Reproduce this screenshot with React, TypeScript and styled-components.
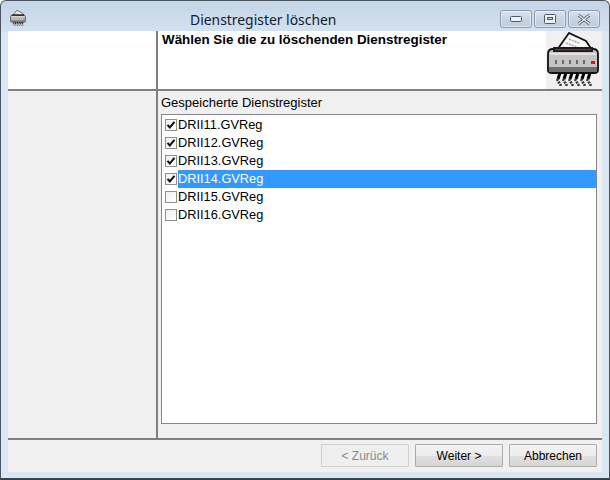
import React from "react";
import styled, { createGlobalStyle } from "styled-components";

const Global = createGlobalStyle`
  html, body { margin: 0; padding: 0; background: #fff; }
  body { width: 610px; height: 480px; overflow: hidden; font-family: "Liberation Sans", Arial, sans-serif; }
`;

const Window = styled.div`
  box-sizing: border-box;
  width: 610px;
  height: 480px;
  display: flex;
  flex-direction: column;
  border: 1px solid #4a5560;
  border-radius: 6px 6px 0 0;
  border-bottom-width: 2px;
  border-bottom-color: #3c4248;
  background: linear-gradient(180deg, #c4d5e6 0px, #d3e1ef 30px, #d9e6f4 31px, #d9e6f4 100%);
`;

const TitleBar = styled.div`
  height: 30px;
  flex: none;
  display: flex;
  align-items: flex-start;
  position: relative;
  padding-left: 9px;
`;

const TitleIcon = styled.div`
  margin-top: 9px;
  line-height: 0;
`;

const Title = styled.div`
  position: absolute;
  left: 189px;
  top: 10px;
  font: 13.9px/18px "Noto Sans", "Open Sans", sans-serif;
  color: #10202e;
  white-space: nowrap;
`;

const WindowButtons = styled.div`
  margin-left: auto;
  margin-right: 9px;
  margin-top: 9px;
  display: flex;
  gap: 2px;
`;

const WindowButton = styled.div`
  box-sizing: border-box;
  width: 32px;
  height: 18px;
  border: 1px solid #8a9cae;
  border-radius: 3px;
  background: linear-gradient(180deg, #d8e3ee 0%, #c6d5e4 50%, #bccddd 100%);
  box-shadow: inset 0 0 0 1px rgba(255, 255, 255, 0.45);
  display: flex;
  align-items: center;
  justify-content: center;
`;

const Client = styled.div`
  flex: 1;
  margin: 0 7px 6px 7px;
  background: #f0f0f0;
  display: flex;
  flex-direction: column;
  min-height: 0;
`;

const HeaderRow = styled.div`
  height: 58px;
  flex: none;
  display: flex;
  border-bottom: 2px solid #808080;
`;

const Side = styled.div<{ $white?: boolean }>`
  width: 148px;
  flex: none;
  border-right: 2px solid #808080;
  background: ${(p) => (p.$white ? "#fff" : "#f0f0f0")};
`;

const HeaderBody = styled.div`
  flex: 1;
  display: flex;
  background: #fff;
`;

const Heading = styled.div`
  flex: 1;
  padding: 1px 0 0 4px;
  font-weight: 700;
  font-size: 13.4px;
  line-height: 16px;
  color: #000;
`;

const IconBox = styled.div`
  width: 56px;
  flex: none;
  box-sizing: border-box;
  padding: 1px 0 0 1px;
  background: #f0f0f0;
  display: flex;
  align-items: flex-start;
  justify-content: flex-start;
`;

const MainRow = styled.div`
  height: 347px;
  flex: none;
  display: flex;
  border-bottom: 2px solid #808080;
`;

const Pane = styled.div`
  flex: 1;
  padding: 4px 5px 14px 3px;
  display: flex;
  flex-direction: column;
  min-width: 0;
`;

const GroupLabel = styled.div`
  font-size: 13px;
  line-height: 16px;
  height: 19px;
  color: #000;
`;

const List = styled.div`
  flex: 1;
  box-sizing: border-box;
  border: 1px solid #828790;
  background: #fff;
  padding: 1px 0 0 3px;
`;

const Row = styled.div`
  height: 18px;
  display: flex;
  align-items: center;
`;

const Box = styled.span`
  box-sizing: border-box;
  width: 12px;
  height: 12px;
  flex: none;
  border: 1px solid #8e8f8f;
  background: linear-gradient(135deg, #f0f0f0, #fff);
  display: flex;
  align-items: center;
  justify-content: center;
`;

const ItemName = styled.span<{ $selected?: boolean }>`
  flex: 1;
  margin-left: 1px;
  height: 18px;
  line-height: 18px;
  font-size: 12.8px;
  color: ${(p) => (p.$selected ? "#fff" : "#000")};
  background: ${(p) => (p.$selected ? "#3399ff" : "transparent")};
`;

const Footer = styled.div`
  flex: 1;
  display: flex;
  justify-content: flex-end;
  align-items: flex-start;
  gap: 6px;
  padding: 4px 5px 0 0;
`;

const WizardButton = styled.button`
  box-sizing: border-box;
  width: 88px;
  height: 23px;
  padding: 0;
  border: 1px solid ${(p) => (p.disabled ? "#d0d0d0" : "#acacac")};
  border-radius: 1px;
  background: ${(p) => (p.disabled ? "#efefef" : "linear-gradient(180deg, #f3f3f3 0%, #ececec 50%, #e0e0e0 51%, #d6d6d6 100%)")};
  color: ${(p) => (p.disabled ? "#8a8a8a" : "#000")};
  font: 12px/20px "Liberation Sans", Arial, sans-serif;
`;

const Check = () => (
  <svg width="10" height="10" viewBox="0 0 10 10">
    <path d="M1.5 4.8 L3.8 7.4 L8.5 1.8" fill="none" stroke="#111" strokeWidth="2" />
  </svg>
);

const Shredder = ({ width, height }: { width: number; height: number }) => (
  <svg width={width} height={height} viewBox="0 0 52 54">
    <path d="M10 18 L22 1 L39 9 L45 18 Z" fill="#f8f8f8" stroke="#111" strokeWidth="1.8" />
    <path d="M22 7 L32 11 M19 11 L35 17 M16 15 L24 18" stroke="#a4a4a4" strokeWidth="1.5" strokeDasharray="2 1" />
    <path d="M1 22 Q1 17 6 17 H46 Q51 17 51 22 V38 Q51 41 47 41 H5 Q1 41 1 38 Z" fill="#c4c4c4" stroke="#111" strokeWidth="1.8" />
    <rect x="6" y="15" width="40" height="5" fill="#1c1c1c" />
    <rect x="8" y="17" width="36" height="1.2" fill="#b02020" />
    <path d="M3 22 H49" stroke="#ededed" strokeWidth="1.4" />
    <rect x="2" y="35" width="48" height="5" fill="#6e6e6e" />
    <path d="M9 28 v4 M16 28 v4 M23 28 v4 M30 28 v4 M37 28 v4" stroke="#6a6a6a" strokeWidth="2" />
    <rect x="44" y="29" width="4" height="3" fill="#e01010" />
    <path d="M13 41 L11 47 M19 41 L17 47 M25 41 L23 47 M31 41 L29 47 M37 41 L35 47 M43 41 L41 47" stroke="#000" strokeWidth="3" />
    <path d="M10 47 L14 54 M16 47 L20 54 M22 47 L26 54 M28 47 L32 54 M34 47 L38 54 M40 47 L44 54" stroke="#333" strokeWidth="2.6" strokeDasharray="2 1" />
  </svg>
);

const items = [
  { name: "DRII11.GVReg", checked: true },
  { name: "DRII12.GVReg", checked: true },
  { name: "DRII13.GVReg", checked: true },
  { name: "DRII14.GVReg", checked: true, selected: true },
  { name: "DRII15.GVReg", checked: false },
  { name: "DRII16.GVReg", checked: false },
];

export default function App() {
  return (
    <>
      <Global />
      <Window>
        <TitleBar>
          <TitleIcon>
            <Shredder width={16} height={16} />
          </TitleIcon>
          <Title>Dienstregister löschen</Title>
          <WindowButtons>
            <WindowButton>
              <svg width="12" height="6" viewBox="0 0 12 6">
                <rect x="0.5" y="0.5" width="11" height="5" rx="1" fill="#eef2f6" stroke="#4c5a68" />
              </svg>
            </WindowButton>
            <WindowButton>
              <svg width="12" height="10" viewBox="0 0 12 10">
                <rect x="0.5" y="0.5" width="11" height="9" rx="1" fill="#eef2f6" stroke="#4c5a68" />
                <rect x="3.5" y="3.5" width="5" height="2" fill="#c6d5e4" stroke="#4c5a68" strokeWidth="1" />
              </svg>
            </WindowButton>
            <WindowButton>
              <svg width="16" height="11" viewBox="0 0 16 11">
                <path d="M2.5 1 L13.5 10 M13.5 1 L2.5 10" stroke="#55636f" strokeWidth="3" />
                <path d="M2.5 1 L13.5 10 M13.5 1 L2.5 10" stroke="#eef2f6" strokeWidth="1.2" />
              </svg>
            </WindowButton>
          </WindowButtons>
        </TitleBar>
        <Client>
          <HeaderRow>
            <Side $white />
            <HeaderBody>
              <Heading>Wählen Sie die zu löschenden Dienstregister</Heading>
              <IconBox>
                <Shredder width={52} height={54} />
              </IconBox>
            </HeaderBody>
          </HeaderRow>
          <MainRow>
            <Side />
            <Pane>
              <GroupLabel>Gespeicherte Dienstregister</GroupLabel>
              <List>
                {items.map((item) => (
                  <Row key={item.name}>
                    <Box>{item.checked && <Check />}</Box>
                    <ItemName $selected={item.selected}>{item.name}</ItemName>
                  </Row>
                ))}
              </List>
            </Pane>
          </MainRow>
          <Footer>
            <WizardButton disabled>&lt; Zurück</WizardButton>
            <WizardButton>Weiter &gt;</WizardButton>
            <WizardButton>Abbrechen</WizardButton>
          </Footer>
        </Client>
      </Window>
    </>
  );
}
